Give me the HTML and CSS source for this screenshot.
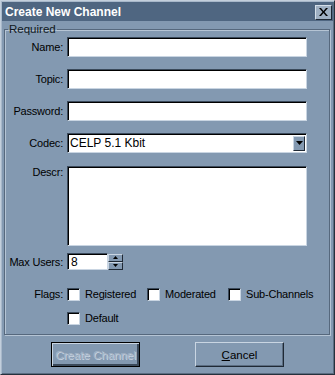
FILE: index.html
```html
<!DOCTYPE html>
<html lang="en">
<head>
<meta charset="UTF-8" />
<title>Create New Channel</title>
<link rel="stylesheet" href="styles.css">
</head>
<body>
  <div class="window">
    <div class="titlebar">
      <span class="title">Create New Channel</span>
      <button class="close" type="button">
        <svg width="9" height="8" viewBox="0 0 9 8"><path d="M0 0h2l2.5 3 2.5-3h2L5.5 4 9 8H7L4.5 5 2 8H0l3.5-4z" fill="#000"/></svg>
      </button>
    </div>

    <form class="body" onsubmit="return false">
      <fieldset class="group">
        <legend>Required</legend>

        <div class="row">
          <label for="name">Name:</label>
          <input class="field" type="text" id="name" />
        </div>

        <div class="row">
          <label for="topic">Topic:</label>
          <input class="field" type="text" id="topic" />
        </div>

        <div class="row">
          <label for="password">Password:</label>
          <input class="field" type="password" id="password" />
        </div>

        <div class="row">
          <label for="codec">Codec:</label>
          <div class="field combo" id="codec">
            <span class="combo-text">CELP 5.1 Kbit</span>
            <span class="combo-btn">
              <svg width="7" height="4" viewBox="0 0 7 4"><path d="M0 0h7L3.5 4z" fill="#000"/></svg>
            </span>
          </div>
        </div>

        <div class="row row-top descr-row">
          <label for="descr">Descr:</label>
          <textarea class="field descr" id="descr"></textarea>
        </div>

        <div class="row users-row">
          <label for="maxusers">Max Users:</label>
          <input class="field users" type="text" id="maxusers" value="8" />
          <div class="spin">
            <span class="spin-btn"><svg width="5" height="3" viewBox="0 0 5 3"><path d="M2.5 0L5 3H0z" fill="#000"/></svg></span>
            <span class="spin-btn"><svg width="5" height="3" viewBox="0 0 5 3"><path d="M0 0h5L2.5 3z" fill="#000"/></svg></span>
          </div>
        </div>

        <div class="row row-top flags-row">
          <label>Flags:</label>
          <div class="flags">
            <label class="check reg"><span class="box"></span>Registered</label>
            <label class="check mod"><span class="box"></span>Moderated</label>
            <label class="check"><span class="box"></span>Sub-Channels</label>
            <label class="check wide"><span class="box"></span>Default</label>
          </div>
        </div>
      </fieldset>

      <div class="buttons">
        <button class="btn btn-default" type="submit" disabled>Create Channel</button>
        <button class="btn" type="button"><u>C</u>ancel</button>
      </div>
    </form>
  </div>
</body>
</html>
```

FILE: styles.css
```css
body {
  margin: 0;
  font-family: "Liberation Sans", Arial, sans-serif;
  font-size: 11px;
  color: #000;
  background: #8399b1;
}
.window {
  width: 335px;
  height: 375px;
  box-sizing: border-box;
  background: #8399b1;
  border: 1px solid;
  border-color: #c3cfdc #26313d #26313d #c3cfdc;
  box-shadow: inset 1px 1px 0 #a8b8ca, inset -1px -1px 0 #5b6d82;
  padding: 1px;
}
.titlebar {
  height: 19px;
  background: #4f6681;
  display: flex;
  align-items: center;
  justify-content: space-between;
  padding: 0 1px 0 3px;
}
.title {
  color: #fff;
  font-weight: bold;
  font-size: 12px;
}
.close {
  width: 17px;
  height: 15px;
  padding: 0;
  margin-top: 1px;
  background: #9fb0c3;
  border: 1px solid;
  border-color: #d5dfe9 #1f2935 #1f2935 #d5dfe9;
  display: flex;
  align-items: center;
  justify-content: center;
}
.body {
  padding: 2px 3px 0 2px;
  margin: 0;
}
.group {
  margin: 0;
  padding: 1px 0 7px 0;
  height: 312px;
  box-sizing: border-box;
  border: 1px solid #56687d;
  box-shadow: 1px 1px 0 #b5c4d4, inset 1px 1px 0 #b5c4d4;
}
.group legend {
  padding: 0 1px;
  margin-left: 3px;
  line-height: 13px;
  color: #101820;
  font-size: 11.5px;
}
.row {
  display: flex;
  align-items: center;
  margin-top: 12px;
}
.row:first-of-type {
  margin-top: 0;
}
.row > label {
  width: 58px;
  text-align: right;
  padding-right: 4px;
  flex: none;
  letter-spacing: -0.2px;
}
.row-top {
  align-items: flex-start;
}
.descr-row {
  margin-top: 13px;
}
.field {
  box-sizing: border-box;
  width: 240px;
  height: 20px;
  margin: 0;
  padding: 0 2px;
  background: #fff;
  border: 1px solid;
  border-color: #3b4a5b #c9d5e2 #c9d5e2 #3b4a5b;
  box-shadow: inset 1px 1px 0 #000;
  font-family: inherit;
  font-size: 12px;
  outline: none;
}
.combo {
  display: flex;
  align-items: center;
  justify-content: space-between;
  padding: 0 1px 0 2px;
}
.combo-btn {
  width: 12px;
  height: 15px;
  box-sizing: border-box;
  background: #8399b1;
  border: 1px solid;
  border-color: #c9d5e2 #1f2935 #1f2935 #c9d5e2;
  display: flex;
  align-items: center;
  justify-content: center;
}
.descr {
  height: 80px;
  resize: none;
  display: block;
}
.users-row {
  margin-top: 7px;
}
.users {
  width: 41px;
  height: 17px;
  padding-left: 3px;
}
.spin {
  display: flex;
  flex-direction: column;
}
.spin-btn {
  width: 15px;
  height: 8px;
  box-sizing: border-box;
  background: #8399b1;
  border: 1px solid;
  border-color: #c9d5e2 #1f2935 #1f2935 #c9d5e2;
  display: flex;
  align-items: center;
  justify-content: center;
}
.flags-row {
  margin-top: 18px;
}
.flags-row > label {
  line-height: 13px;
}
.flags {
  display: flex;
  flex-wrap: wrap;
  row-gap: 11px;
  width: 256px;
}
.check {
  display: flex;
  align-items: center;
  gap: 5px;
  line-height: 13px;
  white-space: nowrap;
  letter-spacing: -0.2px;
}
.check.reg {
  width: 80px;
}
.check.mod {
  width: 81px;
}
.check.wide {
  width: 100%;
}
.box {
  width: 13px;
  height: 13px;
  box-sizing: border-box;
  background: #fff;
  border: 1px solid;
  border-color: #3b4a5b #c9d5e2 #c9d5e2 #3b4a5b;
  box-shadow: inset 1px 1px 0 #000;
}
.buttons {
  display: flex;
  padding-left: 47px;
  gap: 55px;
  margin-top: 7px;
}
.btn {
  box-sizing: border-box;
  width: 89px;
  height: 25px;
  padding: 0;
  background: #8399b1;
  font-family: inherit;
  font-size: 11.5px;
  color: #000;
  border: 1px solid;
  border-color: #c9d5e2 #1f2935 #1f2935 #c9d5e2;
  box-shadow: inset -1px -1px 0 #5b6d82;
}
.btn-default {
  border: 1px solid #000;
  box-shadow: inset 1px 1px 0 #c9d5e2, inset -2px -2px 0 #3b4a5b;
  color: #a4b4c6;
  text-shadow: 1px 1px 0 #c9d5e2;
}
```
